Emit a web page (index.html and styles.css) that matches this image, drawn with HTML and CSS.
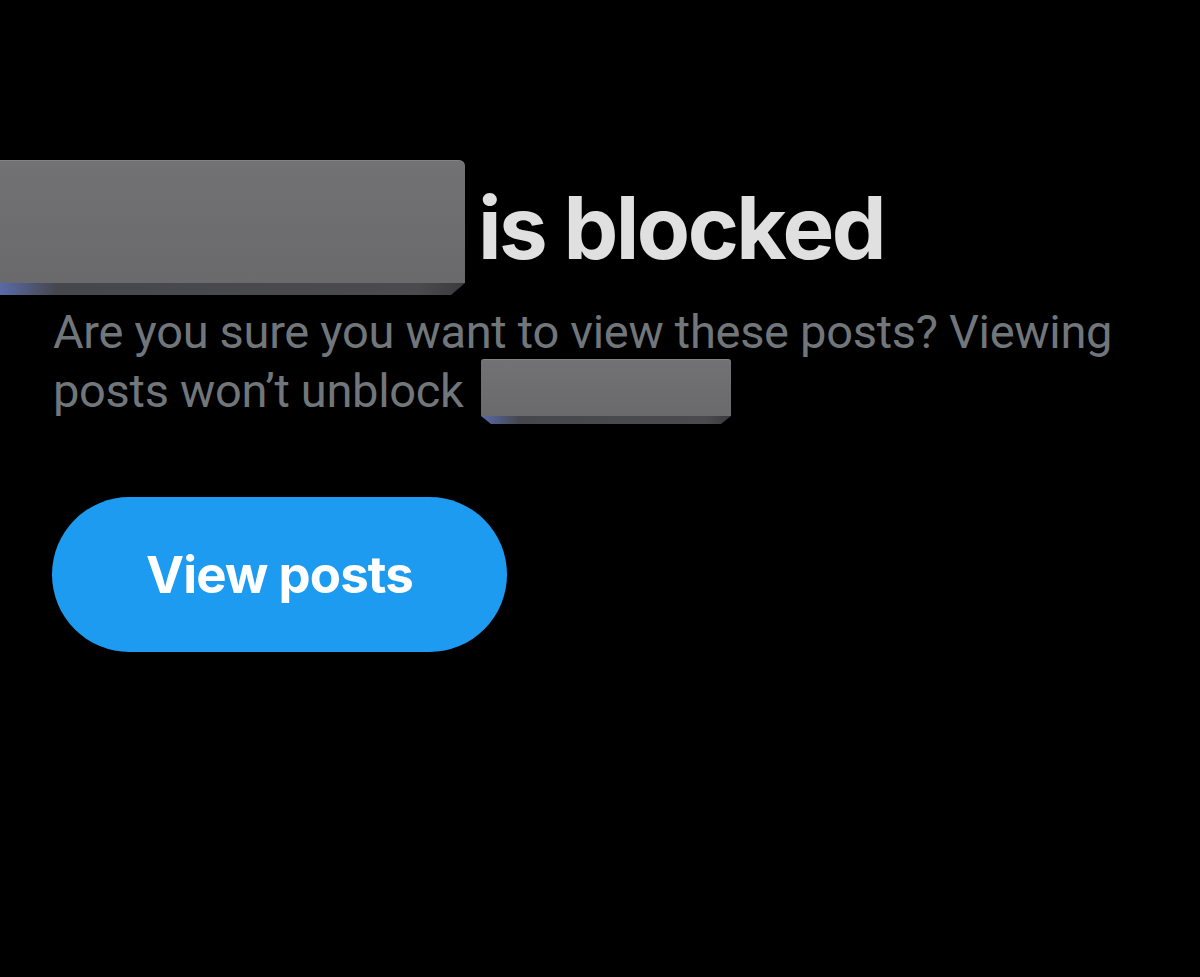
FILE: index.html
```html
<!DOCTYPE html>
<html lang="en">
<head>
<meta charset="utf-8">
<title>Blocked</title>
<link rel="stylesheet" href="styles.css">
</head>
<body>
<main class="page">
  <div class="title-row">
    <span class="redact redact-lg"><span class="redact-face"></span><span class="redact-edge"></span></span>
    <h1 class="title">is blocked</h1>
  </div>
  <p class="desc">Are you sure you want to view these posts? Viewing posts won’t unblock <span class="redact redact-sm"><span class="redact-face"></span><span class="redact-edge"></span></span></p>
  <div class="actions">
    <button class="btn">View posts</button>
  </div>
</main>
</body>
</html>
```
FILE: styles.css
```css
html, body {
  margin: 0;
  padding: 0;
  background: #000;
}
body {
  font-family: Inter, "Noto Sans", sans-serif;
  height: 977px;
  overflow: hidden;
}
.page {
  padding-top: 160px;
  display: flex;
  flex-direction: column;
}
.title-row {
  display: flex;
  align-items: center;
  gap: 13px;
}
.redact {
  display: inline-flex;
  flex-direction: column;
}
.redact-face {
  flex: 1;
  background: linear-gradient(180deg, #727274 0%, #6a6a6c 100%);
  border-top-right-radius: 6px;
  box-shadow: inset 0 1px 0 rgba(255,255,255,0.12);
}
.redact-edge {
  height: 12px;
  background: linear-gradient(90deg, #5a6aa8 0%, #46474d 12%, #4b4b4e 90%, #3a3a3c 100%);
  border-bottom-right-radius: 6px;
  clip-path: polygon(0 0, 100% 0, 97% 100%, 0 100%);
}
.redact-lg {
  width: 465px;
  height: 135px;
}
.redact-sm {
  width: 250px;
  height: 65px;
  margin-left: 6px;
  vertical-align: -9px;
}
.redact-sm .redact-edge {
  height: 8px;
  clip-path: polygon(0 0, 100% 0, 96% 100%, 4% 100%);
  background: linear-gradient(90deg, #5a6aa8 0%, #46474d 15%, #4b4b4e 90%, #3a3a3c 100%);
}
.redact-sm .redact-face {
  border-top-left-radius: 3px;
  border-top-right-radius: 3px;
}
.title {
  margin: 0;
  font-size: 87px;
  font-weight: 700;
  color: #e0e0e0;
  letter-spacing: -2.5px;
  line-height: 1;
}
.desc {
  margin: 9px 0 0;
  padding: 0 40px 0 53px;
  font-family: Roboto, Inter, sans-serif;
  font-size: 47px;
  line-height: 55px;
  font-weight: 400;
  color: #71767b;
  letter-spacing: -0.3px;
}
.actions {
  padding-left: 52px;
  margin-top: 73px;
}
.btn {
  width: 455px;
  height: 155px;
  border: 0;
  border-radius: 78px;
  background: #1d9bf0;
  color: #fff;
  font-family: Inter, "Noto Sans", sans-serif;
  font-size: 51px;
  font-weight: 700;
  letter-spacing: -0.9px;
  padding: 0;
  cursor: pointer;
}
```
